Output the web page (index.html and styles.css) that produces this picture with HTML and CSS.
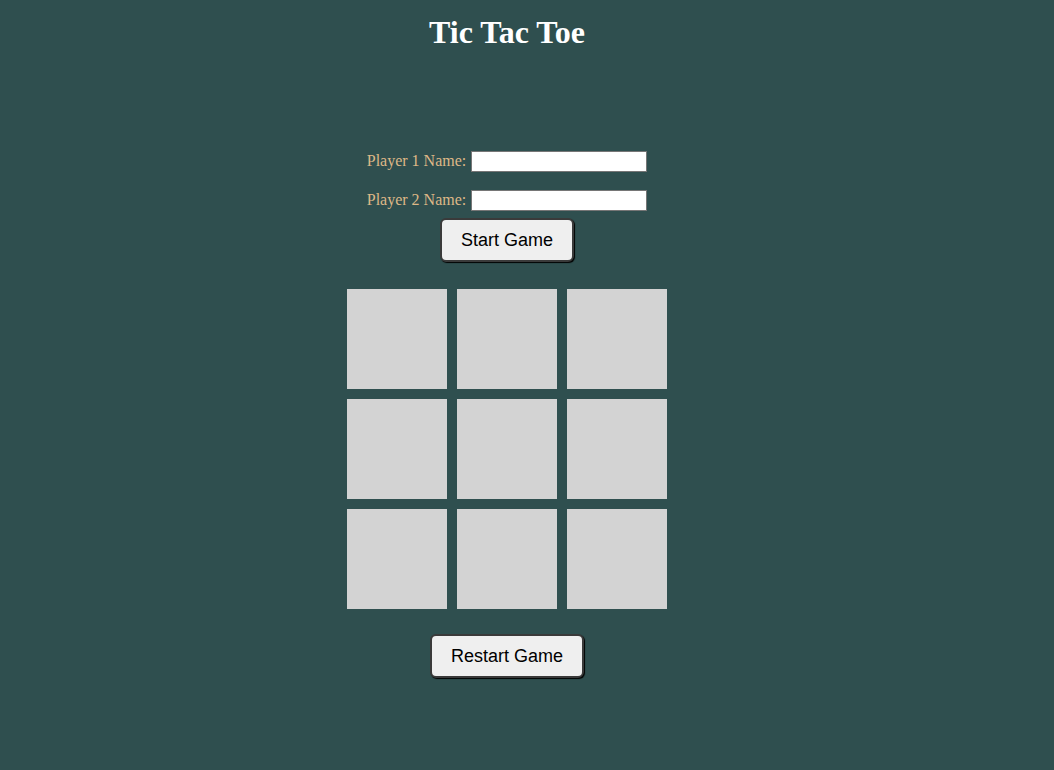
FILE: index.html
```html
<!DOCTYPE html>
<html>
<head>
<meta charset="utf-8">
<title>Tic Tac Toe</title>
<link rel="stylesheet" href="styles.css">
</head>
<body>
<main class="page">
  <h1 class="title">Tic Tac Toe</h1>
  <form class="players">
    <div class="player-row">
      <label class="player-label" for="p1">Player 1 Name:</label>
      <input class="player-input" id="p1" type="text">
    </div>
    <div class="player-row">
      <label class="player-label" for="p2">Player 2 Name:</label>
      <input class="player-input" id="p2" type="text">
    </div>
    <button type="button" class="btn btn-start">Start Game</button>
  </form>
  <div class="board">
    <div class="cell"></div><div class="cell"></div><div class="cell"></div>
    <div class="cell"></div><div class="cell"></div><div class="cell"></div>
    <div class="cell"></div><div class="cell"></div><div class="cell"></div>
  </div>
  <button type="button" class="btn btn-restart">Restart Game</button>
</main>
</body>
</html>
```

FILE: styles.css
```css
html, body {
  margin: 0;
  padding: 0;
  background: #2f4f4f;
  height: 100%;
}
body {
  font-family: "Liberation Serif", "Times New Roman", serif;
}
.page {
  width: 1014px;
  display: flex;
  flex-direction: column;
  align-items: center;
}
.title {
  margin: 14px 0 0;
  font-size: 32px;
  line-height: 37px;
  font-weight: bold;
  color: #ffffff;
}
.players {
  margin-top: 100px;
  display: flex;
  flex-direction: column;
  align-items: center;
}
.player-row {
  display: flex;
  align-items: center;
  height: 21px;
  margin-bottom: 18px;
}
.player-row + .player-row {
  margin-bottom: 7px;
}
.player-label {
  color: #deb887;
  font-size: 16px;
  margin: 0 5px 2px 0;
}
.player-input {
  box-sizing: border-box;
  width: 176px;
  height: 21px;
  margin: 0;
  border: 1px solid #767676;
  background: #ffffff;
  font-size: 13px;
  padding: 1px 2px;
}
.btn {
  box-sizing: border-box;
  height: 44px;
  background: #efefef;
  color: #000000;
  font-family: "Liberation Sans", Arial, sans-serif;
  font-size: 18px;
  border: 2px solid #3a3a3a;
  border-radius: 6px;
  box-shadow: 1px 1px 1px #000000;
  cursor: pointer;
}
.btn-start {
  width: 134px;
}
.btn-restart {
  width: 154px;
  margin-top: 25px;
}
.board {
  margin-top: 27px;
  display: grid;
  grid-template-columns: repeat(3, 100px);
  grid-auto-rows: 100px;
  gap: 10px;
}
.cell {
  background: #d3d3d3;
}
```
